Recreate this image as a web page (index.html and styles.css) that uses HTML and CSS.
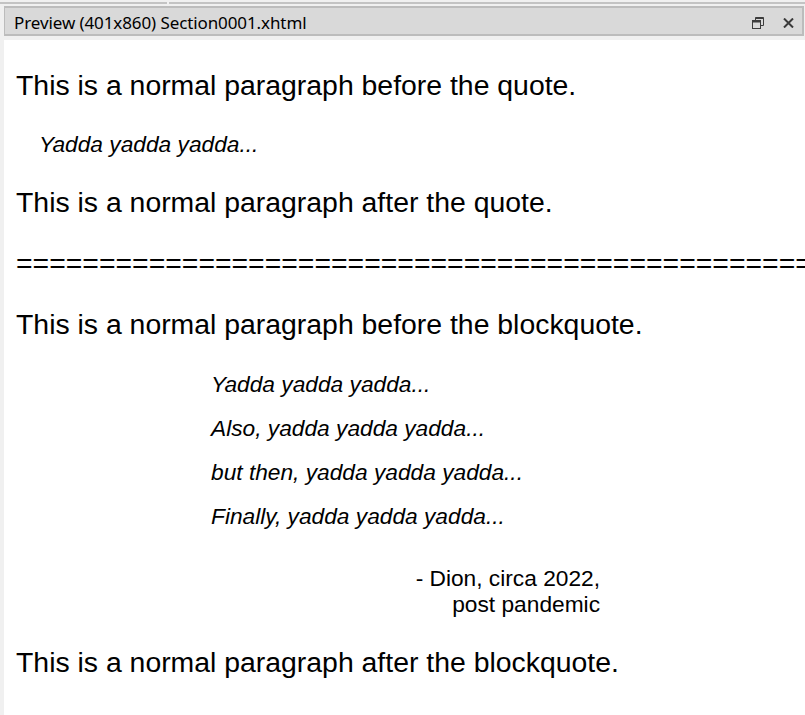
FILE: index.html
```html
<!DOCTYPE html>
<html lang="en">
<head>
<meta charset="utf-8">
<title>Preview</title>
<link rel="stylesheet" href="styles.css">
</head>
<body>
<div class="window">
  <div class="tabstrip">
    <span class="tab tab-first"></span>
    <span class="tab tab-rest"></span>
  </div>
  <div class="titlebar">
    <span class="title">Preview (401x860) Section0001.xhtml</span>
    <span class="controls">
      <svg class="icon-restore" width="12" height="12" viewBox="0 0 12 12" aria-hidden="true">
        <path d="M3.5 3V0.5H11.5V8.5H8.5" fill="none" stroke="#3c3c3c" stroke-width="1"/>
        <rect x="3.5" y="0.5" width="8" height="1.5" fill="#3c3c3c"/>
        <rect x="0.5" y="3.5" width="8" height="8" fill="none" stroke="#3c3c3c" stroke-width="1"/>
        <rect x="0.5" y="3.5" width="8" height="2" fill="#3c3c3c"/>
      </svg>
      <svg class="icon-close" width="11" height="10" viewBox="0 0 11 10" aria-hidden="true">
        <path d="M1 0.5L10 9.5M10 0.5L1 9.5" fill="none" stroke="#3a3a3a" stroke-width="2"/>
      </svg>
    </span>
  </div>
  <div class="page">
    <p class="para first">This is a normal paragraph before the quote.</p>
    <p class="quote">Yadda yadda yadda...</p>
    <p class="para">This is a normal paragraph after the quote.</p>
    <p class="para rule">================================================</p>
    <p class="para">This is a normal paragraph before the blockquote.</p>
    <blockquote class="bq">
      <p class="bq-line">Yadda yadda yadda...</p>
      <p class="bq-line">Also, yadda yadda yadda...</p>
      <p class="bq-line">but then, yadda yadda yadda...</p>
      <p class="bq-line">Finally, yadda yadda yadda...</p>
      <p class="attribution">- Dion, circa 2022,<br>post pandemic</p>
    </blockquote>
    <p class="para">This is a normal paragraph after the blockquote.</p>
  </div>
</div>
</body>
</html>
```

FILE: styles.css
```css
html, body {
  margin: 0;
  padding: 0;
  height: 100%;
  background: #f0f0f0;
  overflow: hidden;
}

.window {
  display: flex;
  flex-direction: column;
  height: 715px;
}

.tabstrip {
  display: flex;
  gap: 2px;
  height: 6px;
  flex: none;
}

.tab {
  height: 2px;
  margin-top: 2px;
  background: #c3c3c3;
}

.tab-first {
  width: 167px;
}

.tab-rest {
  flex: 1;
}

.titlebar {
  flex: none;
  display: flex;
  align-items: center;
  height: 26px;
  margin: 0 1px 0 4px;
  padding: 0 8px 0 9px;
  background: #d9d9d9;
  border: 2px solid #bcbcbc;
  border-left-width: 1px;
}

.title {
  font-family: "Noto Sans", "Open Sans", sans-serif;
  font-size: 17px;
  line-height: 20px;
  color: #000;
  padding-top: 4px;
  letter-spacing: -0.1px;
}

.controls {
  margin-left: auto;
  display: flex;
  align-items: center;
  gap: 19px;
  padding-top: 4px;
}

.icon-restore,
.icon-close {
  display: block;
}

.page {
  flex: 1;
  margin: 4px 0 0 4px;
  padding: 29px 0 0 12px;
  background: #fff;
  overflow: hidden;
  font-family: "Liberation Sans", Arial, sans-serif;
  color: #000;
}

.para {
  font-size: 28.4px;
  line-height: 32px;
  margin: 29px 0 0;
}

.para.first {
  margin-top: 0;
}

.rule {
  white-space: nowrap;
  overflow: hidden;
}

.quote {
  font-size: 22.72px;
  line-height: 26px;
  font-style: italic;
  margin: 30px 0 0 23px;
}

.bq {
  width: 389px;
  margin: 31px 0 0 195px;
  padding: 0;
}

.bq-line {
  font-size: 22.72px;
  line-height: 26px;
  font-style: italic;
  margin: 18px 0 0;
}

.bq-line:first-child {
  margin-top: 0;
}

.attribution {
  font-size: 22.72px;
  line-height: 26px;
  text-align: right;
  margin: 36px 0 0;
}
```
